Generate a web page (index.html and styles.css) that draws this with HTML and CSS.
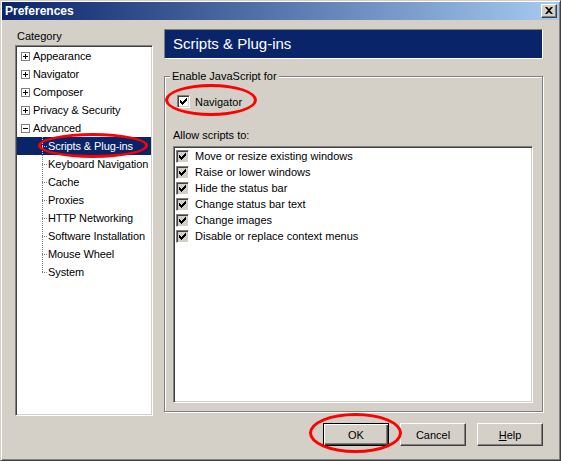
FILE: index.html
```html
<!DOCTYPE html>
<html>
<head>
<meta charset="utf-8">
<title>Preferences</title>
<link rel="stylesheet" href="styles.css">
</head>
<body>
<div class="window">
  <div class="titlebar">
    <span class="title">Preferences</span>
    <span class="close-btn"><svg width="8" height="7" viewBox="0 0 8 7"><path d="M0 0h2l2 2 2-2h2L5 3.5 8 7H6L4 5 2 7H0l3-3.5z" fill="#000"/></svg></span>
  </div>
  <div class="main">
    <div class="left">
      <div class="cat-label">Category</div>
      <div class="tree">
        <div class="row top"><svg class="tog" width="9" height="9" viewBox="0 0 9 9"><rect x="0.5" y="0.5" width="8" height="8" fill="#fff" stroke="#808080"/><path d="M2 4.5h5M4.5 2v5" stroke="#000"/></svg><span>Appearance</span></div>
        <div class="row top"><svg class="tog" width="9" height="9" viewBox="0 0 9 9"><rect x="0.5" y="0.5" width="8" height="8" fill="#fff" stroke="#808080"/><path d="M2 4.5h5M4.5 2v5" stroke="#000"/></svg><span>Navigator</span></div>
        <div class="row top"><svg class="tog" width="9" height="9" viewBox="0 0 9 9"><rect x="0.5" y="0.5" width="8" height="8" fill="#fff" stroke="#808080"/><path d="M2 4.5h5M4.5 2v5" stroke="#000"/></svg><span>Composer</span></div>
        <div class="row top"><svg class="tog" width="9" height="9" viewBox="0 0 9 9"><rect x="0.5" y="0.5" width="8" height="8" fill="#fff" stroke="#808080"/><path d="M2 4.5h5M4.5 2v5" stroke="#000"/></svg><span>Privacy &amp; Security</span></div>
        <div class="row top"><svg class="tog" width="9" height="9" viewBox="0 0 9 9"><rect x="0.5" y="0.5" width="8" height="8" fill="#fff" stroke="#808080"/><path d="M2 4.5h5" stroke="#000"/></svg><span>Advanced</span></div>
        <div class="row child selected"><span class="branch"></span><span>Scripts &amp; Plug-ins</span></div>
        <div class="row child"><span class="branch"></span><span>Keyboard Navigation</span></div>
        <div class="row child"><span class="branch"></span><span>Cache</span></div>
        <div class="row child"><span class="branch"></span><span>Proxies</span></div>
        <div class="row child"><span class="branch"></span><span>HTTP Networking</span></div>
        <div class="row child"><span class="branch"></span><span>Software Installation</span></div>
        <div class="row child"><span class="branch"></span><span>Mouse Wheel</span></div>
        <div class="row child last"><span class="branch"></span><span>System</span></div>
      </div>
    </div>
    <div class="right">
      <div class="header">Scripts &amp; Plug-ins</div>
      <div class="groupbox">
        <div class="gb-label">Enable JavaScript for</div>
        <div class="nav-row">
          <span class="cb white"><svg width="9" height="9" viewBox="0 0 9 9"><path d="M1 3h1v3H1zM2 4h1v3H2zM3 5h1v3H3zM4 4h1v3H4zM5 3h1v3H5zM6 2h1v3H6zM7 1h1v3H7z" fill="#000"/></svg></span>
          <span>Navigator</span>
        </div>
        <div class="allow-label">Allow scripts to:</div>
        <div class="listbox">
          <div class="item"><span class="cb gray"><svg width="9" height="9" viewBox="0 0 9 9"><path d="M1 3h1v3H1zM2 4h1v3H2zM3 5h1v3H3zM4 4h1v3H4zM5 3h1v3H5zM6 2h1v3H6zM7 1h1v3H7z" fill="#000"/></svg></span><span>Move or resize existing windows</span></div>
          <div class="item"><span class="cb gray"><svg width="9" height="9" viewBox="0 0 9 9"><path d="M1 3h1v3H1zM2 4h1v3H2zM3 5h1v3H3zM4 4h1v3H4zM5 3h1v3H5zM6 2h1v3H6zM7 1h1v3H7z" fill="#000"/></svg></span><span>Raise or lower windows</span></div>
          <div class="item"><span class="cb gray"><svg width="9" height="9" viewBox="0 0 9 9"><path d="M1 3h1v3H1zM2 4h1v3H2zM3 5h1v3H3zM4 4h1v3H4zM5 3h1v3H5zM6 2h1v3H6zM7 1h1v3H7z" fill="#000"/></svg></span><span>Hide the status bar</span></div>
          <div class="item"><span class="cb gray"><svg width="9" height="9" viewBox="0 0 9 9"><path d="M1 3h1v3H1zM2 4h1v3H2zM3 5h1v3H3zM4 4h1v3H4zM5 3h1v3H5zM6 2h1v3H6zM7 1h1v3H7z" fill="#000"/></svg></span><span>Change status bar text</span></div>
          <div class="item"><span class="cb gray"><svg width="9" height="9" viewBox="0 0 9 9"><path d="M1 3h1v3H1zM2 4h1v3H2zM3 5h1v3H3zM4 4h1v3H4zM5 3h1v3H5zM6 2h1v3H6zM7 1h1v3H7z" fill="#000"/></svg></span><span>Change images</span></div>
          <div class="item"><span class="cb gray"><svg width="9" height="9" viewBox="0 0 9 9"><path d="M1 3h1v3H1zM2 4h1v3H2zM3 5h1v3H3zM4 4h1v3H4zM5 3h1v3H5zM6 2h1v3H6zM7 1h1v3H7z" fill="#000"/></svg></span><span>Disable or replace context menus</span></div>
        </div>
      </div>
    </div>
  </div>
  <div class="buttons">
    <button class="btn default">OK</button>
    <button class="btn">Cancel</button>
    <button class="btn"><u>H</u>elp</button>
  </div>
  <div class="ring ring-scripts"></div>
  <div class="ring ring-nav"></div>
  <div class="ring ring-ok"></div>
</div>
</body>
</html>
```

FILE: styles.css
```css
* { box-sizing: border-box; }
html, body { margin: 0; padding: 0; background: #d4d0c8; }
body {
  font-family: "Liberation Sans", Arial, sans-serif;
  font-size: 11px;
  color: #000;
}
.window {
  position: relative;
  width: 561px;
  height: 461px;
  background: #d4d0c8;
  border: 1px solid;
  border-color: #d4d0c8 #404040 #404040 #d4d0c8;
  box-shadow: inset 1px 1px #fff, inset -1px -1px #808080;
  padding: 1px;
  overflow: hidden;
}
.titlebar {
  height: 18px;
  display: flex;
  align-items: center;
  justify-content: space-between;
  background: linear-gradient(to right, #0a246a, #a6caf0);
  padding: 0 2px 0 3px;
}
.title {
  color: #fff;
  font-weight: bold;
  font-size: 12px;
}
.close-btn {
  width: 16px;
  height: 14px;
  background: #d4d0c8;
  border: 1px solid;
  border-color: #fff #404040 #404040 #fff;
  box-shadow: inset -1px -1px #808080;
  display: flex;
  align-items: center;
  justify-content: center;
  padding-bottom: 1px;
}
.main {
  display: flex;
  gap: 11px;
  padding: 9px 16px 0 13px;
  height: 396px;
}
.left {
  width: 138px;
  display: flex;
  flex-direction: column;
}
.cat-label {
  line-height: 14px;
  padding-left: 2px;
  margin-bottom: 2px;
}
.tree {
  height: 371px;
  background: #fff;
  border: 1px solid;
  border-color: #808080 #fff #fff #808080;
  box-shadow: inset 1px 1px #404040, inset -1px -1px #d4d0c8;
  padding: 1px 1px;
}
.row {
  height: 18px;
  display: flex;
  align-items: center;
  white-space: nowrap;
  letter-spacing: -0.1px;
}
.row.top { padding-left: 4px; }
.row.top .tog { margin-right: 3px; flex: none; }
.row.child { padding-left: 25px; }
.branch {
  width: 6px;
  height: 18px;
  flex: none;
  background-image:
    repeating-linear-gradient(to bottom, #808080 0 1px, transparent 1px 2px),
    repeating-linear-gradient(to right, #808080 0 1px, transparent 1px 2px);
  background-size: 1px 18px, 6px 1px;
  background-position: 0 0, 0 9px;
  background-repeat: no-repeat;
}
.row.last .branch { background-size: 1px 10px, 6px 1px; }
.row.selected {
  background: #0a246a;
  color: #fff;
}
.row.selected .branch {
  background-image:
    repeating-linear-gradient(to bottom, #c0c8e0 0 1px, transparent 1px 2px),
    repeating-linear-gradient(to right, #c0c8e0 0 1px, transparent 1px 2px);
}
.right {
  width: 379px;
  display: flex;
  flex-direction: column;
}
.header {
  height: 30px;
  background: #0a246a;
  border: 1px solid;
  border-color: #808080 #fff #fff #808080;
  color: #fff;
  font-size: 15px;
  display: flex;
  align-items: center;
  padding-left: 8px;
  padding-bottom: 1px;
}
.groupbox {
  margin-top: 17px;
  height: 336px;
  border: 1px solid #808080;
  box-shadow: inset 1px 1px #fff, 1px 1px #fff;
}
.gb-label {
  width: fit-content;
  line-height: 13px;
  margin: -7px 0 0 5px;
  padding: 0 2px;
  background: #d4d0c8;
}
.nav-row {
  display: flex;
  align-items: center;
  height: 13px;
  margin: 12px 0 0 12px;
}
.nav-row .cb { margin-right: 5px; }
.cb {
  width: 13px;
  height: 13px;
  flex: none;
  border: 1px solid;
  border-color: #808080 #fff #fff #808080;
  box-shadow: inset 1px 1px #404040, inset -1px -1px #d4d0c8;
  display: flex;
  align-items: center;
  justify-content: center;
}
.cb svg { display: block; }
.cb.white { background: #fff; }
.cb.gray { background: #d4d0c8; }
.allow-label {
  line-height: 13px;
  margin: 21px 0 0 8px;
}
.listbox {
  margin: 4px 0 0 8px;
  width: 360px;
  height: 257px;
  background: #fff;
  border: 1px solid;
  border-color: #808080 #fff #fff #808080;
  box-shadow: inset 1px 1px #404040, inset -1px -1px #d4d0c8;
  padding: 1px 1px;
}
.item {
  height: 16px;
  display: flex;
  align-items: center;
  padding-left: 1px;
  white-space: nowrap;
}
.item .cb { margin-right: 6px; }
.buttons {
  display: flex;
  justify-content: flex-end;
  gap: 11px;
  padding-right: 16px;
  margin-top: 7px;
}
.btn {
  width: 66px;
  height: 23px;
  font-family: "Liberation Sans", Arial, sans-serif;
  font-size: 11px;
  color: #000;
  background: #d4d0c8;
  border: 1px solid;
  border-color: #fff #404040 #404040 #fff;
  box-shadow: inset -1px -1px #808080;
  padding: 0;
  margin: 0;
}
.btn.default {
  border: 1px solid #000;
  box-shadow: inset 1px 1px #fff, inset -1px -1px #404040, inset -2px -2px #808080;
}
.ring {
  position: absolute;
  border: 3px solid #ff0000;
  border-radius: 50%;
  pointer-events: none;
}
.ring-scripts { left: 37px; top: 132px; width: 110px; height: 25px; }
.ring-nav { left: 164px; top: 83px; width: 92px; height: 32px; }
.ring-ok { left: 308px; top: 412px; width: 93px; height: 40px; }
```
